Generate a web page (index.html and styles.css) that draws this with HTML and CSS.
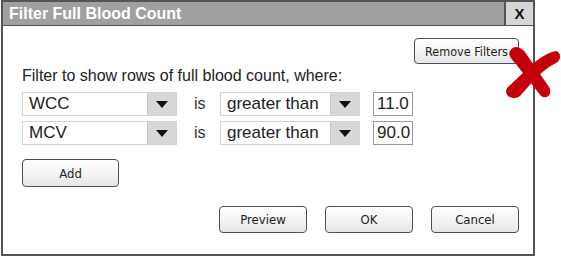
FILE: index.html
```html
<!DOCTYPE html>
<html lang="en">
<head>
    <meta charset="UTF-8">
    <title>Filter Full Blood Count</title>
    <link rel="stylesheet" href="styles.css">
</head>
<body>
    <div class="dialog">
        <div class="titlebar">
            <span class="title">Filter Full Blood Count</span>
            <span class="close">X</span>
        </div>

        <div class="content">
            <div class="top-row">
                <button class="btn btn-remove">Remove Filters</button>
            </div>

            <p class="intro">Filter to show rows of full blood count, where:</p>

            <div class="rule">
                <div class="select sel-field"><span>WCC</span><i class="arrow"></i></div>
                <span class="is">is</span>
                <div class="select sel-op"><span>greater than</span><i class="arrow"></i></div>
                <div class="value">11.0</div>
            </div>
            <div class="rule">
                <div class="select sel-field"><span>MCV</span><i class="arrow"></i></div>
                <span class="is">is</span>
                <div class="select sel-op"><span>greater than</span><i class="arrow"></i></div>
                <div class="value">90.0</div>
            </div>

            <button class="btn btn-add">Add</button>

            <div class="actions">
                <button class="btn">Preview</button>
                <button class="btn">OK</button>
                <button class="btn">Cancel</button>
            </div>
        </div>
    </div>

    <!-- red cross over the remove button -->
    <svg class="cross" width="58" height="56" viewBox="0 0 58 56">
        <path d="M7 6 C11 -1 19 2 24 10 L46 42 C50 49 44 55 38 51 L16 23 C11 16 4 11 7 6 Z" fill="#c4000b"/>
        <path d="M53 6 C58 7 59 15 53 18 C45 22 38 28 32 34 L17 51 C10 56 0 51 4 43 L21 27 C31 17 42 8 53 6 Z" fill="#c4000b"/>
    </svg>
</body>
</html>
```

FILE: styles.css
```css
body {
	margin: 0;
	background-color: white;
	font-family: "Liberation Sans", Arial, sans-serif;
	color: #222;
}

.dialog {
	width: 534px;
	height: 256px;
	margin-left: 1px;
	box-sizing: border-box;
	border: 2px solid #555;
	background-color: white;
	display: flex;
	flex-direction: column;
}

.titlebar {
	height: 23px;
	display: flex;
	background-color: #a0a0a0;
	border-bottom: 1px solid #555;
}

.title {
	flex: 1;
	padding-left: 6px;
	font-size: 16px;
	font-weight: bold;
	line-height: 23px;
	color: white;
}

.close {
	width: 27px;
	background-color: #d6d6d6;
	border-left: 2px solid #555;
	text-align: center;
	font-size: 15px;
	font-weight: bold;
	line-height: 23px;
	color: #111;
}

.content {
	padding: 12px 14px 0 19px;
	display: flex;
	flex-direction: column;
}

.top-row {
	display: flex;
	justify-content: flex-end;
}

.btn {
	box-sizing: border-box;
	width: 88px;
	height: 27px;
	padding: 0;
	border: 1.5px solid #44525f;
	border-radius: 4px;
	background: linear-gradient(#ffffff, #f4f4f4 50%, #e6e6e6);
	font-family: "DejaVu Sans", Tahoma, sans-serif;
	font-stretch: semi-condensed;
	font-size: 13px;
	color: #222;
}

.btn-remove {
	width: 105px;
	height: 26px;
	font-size: 12.5px;
}

.intro {
	margin: 3px 0 7px 0;
	font-size: 16px;
	line-height: 18px;
}

.rule {
	display: flex;
	align-items: center;
	height: 24px;
	margin-bottom: 5px;
}

.select {
	box-sizing: border-box;
	height: 24px;
	display: flex;
	border: 1px solid #d4d4d4;
	background-color: white;
}

.select span {
	flex: 1;
	padding-left: 6px;
	font-size: 17px;
	line-height: 22px;
}

.arrow {
	width: 28px;
	background-color: #d8d8d8;
	border-left: 1px solid #c8c8c8;
	display: flex;
	align-items: center;
	justify-content: center;
}

.arrow::after {
	content: "";
	border-left: 6px solid transparent;
	border-right: 6px solid transparent;
	border-top: 7px solid #111;
}

.sel-field {
	width: 155px;
}

.sel-op {
	width: 140px;
}

.is {
	width: 43px;
	box-sizing: border-box;
	padding-left: 17px;
	font-size: 16px;
	color: #333;
}

.value {
	box-sizing: border-box;
	width: 40px;
	height: 24px;
	margin-left: 13px;
	border: 1px solid #9a9a9a;
	font-size: 17px;
	line-height: 22px;
	padding-left: 3px;
}

.btn-add {
	width: 97px;
	height: 28px;
	margin-top: 9px;
}

.actions {
	display: flex;
	justify-content: flex-end;
	gap: 18px;
	margin-top: 19px;
}

.cross {
	position: absolute;
	left: 503px;
	top: 45px;
}
```
